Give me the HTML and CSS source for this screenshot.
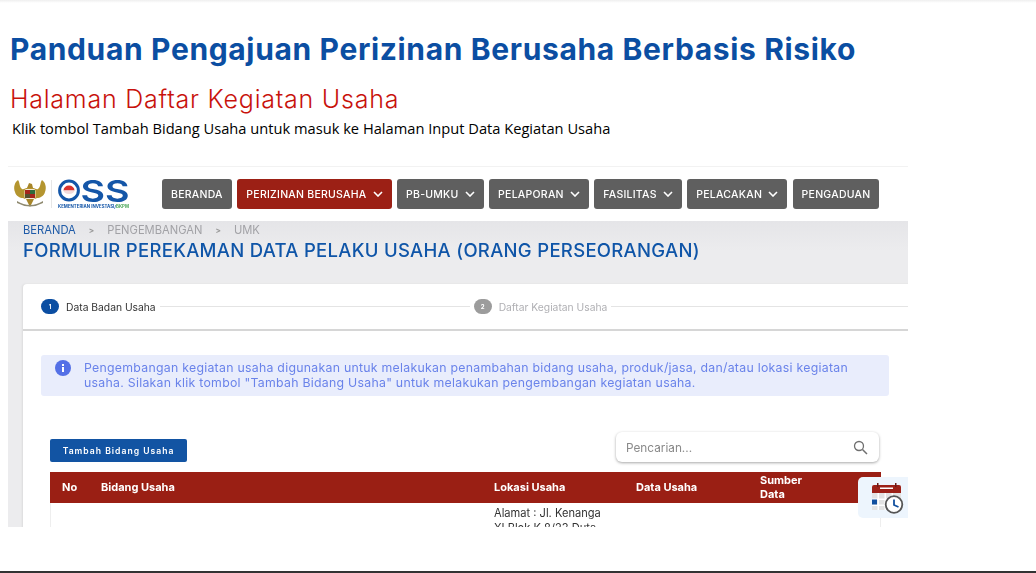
FILE: index.html
```html
<!DOCTYPE html>
<html lang="id">
<head>
<meta charset="utf-8">
<title>Panduan Pengajuan Perizinan Berusaha Berbasis Risiko</title>
<link rel="stylesheet" href="styles.css">
</head>
<body>
<div class="slide">
  <h1 class="title">Panduan Pengajuan Perizinan Berusaha Berbasis Risiko</h1>
  <h2 class="subtitle">Halaman Daftar Kegiatan Usaha</h2>
  <p class="lead">Klik tombol Tambah Bidang Usaha untuk masuk ke Halaman Input Data Kegiatan Usaha</p>

  <section class="shot">
    <header class="topbar">
      <div class="logo">
        <svg class="garuda" width="34" height="30" viewBox="0 0 34 30">
          <path d="M16 9 C13 8 11 11 9 10 C6 8 7 3 5 1 C2 3 0 8 2 13 C3 17 7 19 10 19 L12 20 L22 20 L24 19 C27 19 31 17 32 13 C34 8 32 3 29 1 C27 3 28 8 25 10 C23 11 21 8 18 9 Z" fill="#b4952f"/>
          <path d="M14 9 L16 4 L19 5 L20 9 Z" fill="#a8862a"/>
          <rect x="11.500" y="10" width="11" height="10" rx="2" fill="#f3e9d8"/>
          <rect x="12" y="11" width="5" height="4" fill="#a3261c"/>
          <rect x="17" y="15" width="5" height="4" fill="#a3261c"/>
          <rect x="17" y="11" width="5" height="4" fill="#2f6b3d"/>
          <rect x="12" y="15" width="5" height="4" fill="#55502f"/>
          <path d="M13 20 L17 28 L21 20 Z" fill="#a8862a"/>
          <path d="M4 22 Q17 30 30 22 L30 24 Q17 31 4 24 Z" fill="#8f8a70"/>
        </svg>
        <span class="logo-rule"></span>
        <svg class="oss" width="72" height="30" viewBox="0 0 72 30">
          <circle cx="11" cy="11.500" r="9.400" fill="#fff" stroke="#1456a8" stroke-width="3"/>
          <path d="M5.500 11.500 A5.500 5 0 0 1 16.500 11.500 Z" fill="#d8322e"/>
          <path d="M5.500 11.500 A5.500 3.500 0 0 0 16.500 11.500 Z" fill="#f2dcdc"/>
          <text class="oss-ss" x="22.500" y="22.500" textLength="49" lengthAdjust="spacingAndGlyphs">SS</text>
          <text class="oss-sub" x="0" y="29" textLength="71" lengthAdjust="spacingAndGlyphs">KEMENTERIAN INVESTASI/<tspan class="oss-green">BKPM</tspan></text>
        </svg>
      </div>
      <nav class="menu">
        <a class="menu-item">BERANDA</a>
        <a class="menu-item menu-active">PERIZINAN BERUSAHA <svg class="chev" width="10" height="6" viewBox="0 0 10 6"><path d="M1 1 L5 5 L9 1" /></svg></a>
        <a class="menu-item">PB-UMKU <svg class="chev" width="10" height="6" viewBox="0 0 10 6"><path d="M1 1 L5 5 L9 1" /></svg></a>
        <a class="menu-item">PELAPORAN <svg class="chev" width="10" height="6" viewBox="0 0 10 6"><path d="M1 1 L5 5 L9 1" /></svg></a>
        <a class="menu-item">FASILITAS <svg class="chev" width="10" height="6" viewBox="0 0 10 6"><path d="M1 1 L5 5 L9 1" /></svg></a>
        <a class="menu-item">PELACAKAN <svg class="chev" width="10" height="6" viewBox="0 0 10 6"><path d="M1 1 L5 5 L9 1" /></svg></a>
        <a class="menu-item">PENGADUAN</a>
      </nav>
    </header>

    <main class="content">
      <div class="crumbs">
        <span class="crumb-home">BERANDA</span><span class="crumb-sep">&gt;</span><span>PENGEMBANGAN</span><span class="crumb-sep">&gt;</span><span>UMK</span>
      </div>
      <h3 class="form-title">FORMULIR PEREKAMAN DATA PELAKU USAHA (ORANG PERSEORANGAN)</h3>

      <div class="card">
        <div class="steps">
          <span class="step-num">1</span><span class="step-label">Data Badan Usaha</span><span class="step-line step-line-first"></span>
          <span class="step-num step-off">2</span><span class="step-label label-off">Daftar Kegiatan Usaha</span><span class="step-line"></span>
        </div>

        <div class="alert">
          <svg class="alert-icon" width="16" height="16" viewBox="0 0 16 16">
            <circle cx="8" cy="8" r="8" fill="#5470e6"/>
            <rect x="7" y="7" width="2" height="5" fill="#fff"/>
            <rect x="7" y="4" width="2" height="2" fill="#fff"/>
          </svg>
          <p class="alert-text">Pengembangan kegiatan usaha digunakan untuk melakukan penambahan bidang usaha, produk/jasa, dan/atau lokasi kegiatan<br>usaha. Silakan klik tombol "Tambah Bidang Usaha" untuk melakukan pengembangan kegiatan usaha.</p>
        </div>

        <div class="tools">
          <button class="add-btn">Tambah Bidang Usaha</button>
          <div class="search">
            <span class="search-text">Pencarian...</span>
            <svg width="15" height="15" viewBox="0 0 15 15"><circle cx="6" cy="6" r="4.500" fill="none" stroke="#6f6f6f" stroke-width="1.300"/><path d="M9.500 9.500 L14 14" stroke="#6f6f6f" stroke-width="1.500"/></svg>
          </div>
        </div>

        <table class="grid">
          <thead>
            <tr>
              <th class="c-no">No</th>
              <th class="c-bidang">Bidang Usaha</th>
              <th class="c-lokasi">Lokasi Usaha</th>
              <th class="c-data">Data Usaha</th>
              <th class="c-sumber">Sumber<br>Data</th>
            </tr>
          </thead>
          <tbody>
            <tr>
              <td class="cell-first"></td>
              <td></td>
              <td class="cell-text">Alamat : Jl. Kenanga<br>XI Blok K 8/23 Duta</td>
              <td></td>
              <td class="cell-last"></td>
            </tr>
          </tbody>
        </table>
      </div>
    </main>

    <aside class="float-cal">
      <svg width="34" height="32" viewBox="0 0 34 32">
        <rect x="2" y="11" width="29" height="17" fill="#e3e3e3"/>
        <g fill="#fff">
          <rect x="7.500" y="11" width="1.500" height="17"/><rect x="14.500" y="11" width="1.500" height="17"/><rect x="21.500" y="11" width="1.500" height="17"/>
          <rect x="2" y="16.500" width="29" height="1.500"/><rect x="2" y="22.500" width="29" height="1.500"/>
        </g>
        <rect x="2" y="17.500" width="5" height="5" fill="#12509f"/>
        <path d="M2 5 Q2 3 4 3 L29 3 Q31 3 31 5 L31 11 L2 11 Z" fill="#9c2118"/>
        <rect x="7" y="1" width="1.500" height="4" fill="#6b1a14"/><rect x="25" y="1" width="1.500" height="4" fill="#6b1a14"/>
        <rect x="10" y="5.500" width="13" height="1.500" fill="#fff"/>
        <circle cx="24" cy="22.500" r="8.300" fill="#fff" stroke="#555" stroke-width="1.800"/>
        <path d="M24 17.500 L24 23 L28.500 25" fill="none" stroke="#12509f" stroke-width="1.800"/>
      </svg>
    </aside>
  </section>
</div>
<div class="bottom-rule"></div>
</body>
</html>
```

FILE: styles.css
```css
* { box-sizing: border-box; }
html, body { margin: 0; padding: 0; background: #fff; }
body { width: 1036px; height: 573px; overflow: hidden; display: flex; flex-direction: column; font-family: "Inter", "Liberation Sans", sans-serif; }

.slide { flex: 1; min-height: 0; padding-top: 32px; background: linear-gradient(#efefef, #fff 3px); }
.title { margin: 0 0 0 10px; font-size: 30px; line-height: 34px; font-weight: 700; color: #0b4ea2; letter-spacing: .64px; white-space: nowrap; }
.subtitle { margin: 18px 0 0 10px; font-size: 25px; line-height: 30px; font-weight: 300; color: #c8120c; letter-spacing: .76px; white-space: nowrap; }
.lead { margin: 4px 0 0 12px; font-family: "Open Sans", sans-serif; font-size: 14.660px; line-height: 20px; color: #000; white-space: nowrap; }

.shot { position: relative; width: 900px; height: 361px; margin: 28px 0 0 8px; overflow: hidden; background: #fff; filter: blur(.35px); }
.topbar { height: 55px; display: flex; align-items: center; border-top: 1px solid #f2f2f2; }
.logo { width: 154px; display: flex; align-items: center; padding-left: 5px; gap: 4px; flex: none; }
.garuda { flex: none; }
.logo-rule { width: 1px; height: 28px; background: #e6e6e6; margin: 0 2px 0 0; }
.oss { flex: none; }
.oss-ss { font-size: 30px; font-weight: 600; fill: #1456a8; }
.oss-sub { font-size: 4.500px; font-weight: 700; fill: #1456a8; }
.oss-green { fill: #4da85a; }

.menu { display: flex; gap: 5.500px; }
.menu-item { height: 30px; display: flex; align-items: center; gap: 6px; padding: 0 9px; background: #5f5f5f; color: #fff; font-size: 10.500px; font-weight: 500; border-radius: 3px; white-space: nowrap; letter-spacing: .25px; }
.menu-active { background: #9c2015; }
.chev { fill: none; stroke: #fff; stroke-width: 1.600; flex: none; }

.content { height: 306px; background: linear-gradient(#e5e5e8, #ececee 30px); padding: 3px 0 0 15px; }
.crumbs { display: flex; font-size: 11.200px; line-height: 13px; color: #a2a2a6; white-space: nowrap; }
.crumb-home { color: #1f5ba8; }
.crumb-sep { margin: 0 13px; font-size: 8px; font-weight: 700; color: #999; }
.form-title { margin: 1px 0 0; font-size: 18.500px; line-height: 24px; font-weight: 500; color: #0f55a8; letter-spacing: .3px; white-space: nowrap; }

.card { margin-top: 22px; width: 900px; height: 263px; background: #fff; border-radius: 4px 0 0 0; box-shadow: -1px 0 2px #dcdcdc; }
.steps { height: 47px; display: flex; align-items: center; padding-left: 18px; border-bottom: 2px solid #d6d6d6; }
.step-num { width: 18px; height: 15px; border-radius: 8px; background: #0b4ea2; color: #fff; font-size: 6px; font-weight: 700; display: flex; align-items: center; justify-content: center; flex: none; }
.step-off { background: #9c9c9c; }
.step-label { margin-left: 7px; font-size: 10.300px; color: #333; white-space: nowrap; }
.label-off { color: #b0b0b4; }
.step-line { flex: 1; height: 1px; background: #e4e4e4; margin: 0 4px; }
.step-line-first { flex: none; width: 310px; }

.alert { width: 848px; height: 41px; margin: 24px 0 0 18px; background: #e9edfc; border-radius: 3px; display: flex; padding: 5px 0 0 14px; gap: 13px; }
.alert-icon { flex: none; }
.alert-text { margin: 0; font-size: 12.300px; line-height: 15px; letter-spacing: .27px; color: #6a83ea; white-space: nowrap; }

.tools { display: flex; justify-content: space-between; align-items: flex-start; width: 829px; margin: 36px 0 0 27px; }
.add-btn { width: 137px; height: 23px; margin-top: 7px; border: 0; border-radius: 2px; background: #1254a3; color: #fff; font-family: inherit; font-size: 8.600px; font-weight: 600; letter-spacing: 1px; }
.search { width: 263px; height: 30px; background: #fff; border-radius: 6px; box-shadow: 0 1px 3px rgba(0,0,0,.35); display: flex; align-items: center; justify-content: space-between; padding: 0 11px 0 10px; }
.search-text { font-size: 11.800px; color: #8a8a8a; padding-top: 2px; }

.grid { width: 831px; margin: 10px 0 0 27px; border-collapse: separate; border-spacing: 0; table-layout: fixed; }
.grid th { height: 31px; background: #9a1f14; color: #fff; font-size: 11px; font-weight: 700; text-align: left; line-height: 13.500px; padding: 0; vertical-align: middle; }
.grid .c-no { width: 51px; padding-left: 12px; }
.c-bidang { width: 393px; }
.c-lokasi { width: 142px; }
.c-data { width: 124px; }
.cell-first { border-left: 1px solid #eee; }
.cell-last { border-right: 1px solid #eee; }
.cell-text { font-size: 11.100px; line-height: 15px; color: #333; padding: 3px 0 0; vertical-align: top; white-space: nowrap; }

.float-cal { position: absolute; right: 0; top: 311px; width: 50px; height: 41px; background: #edf5fd; border-radius: 5px 0 0 5px; padding: 5px 0 0 12px; }

.bottom-rule { height: 2px; background: #333; flex: none; }
```
